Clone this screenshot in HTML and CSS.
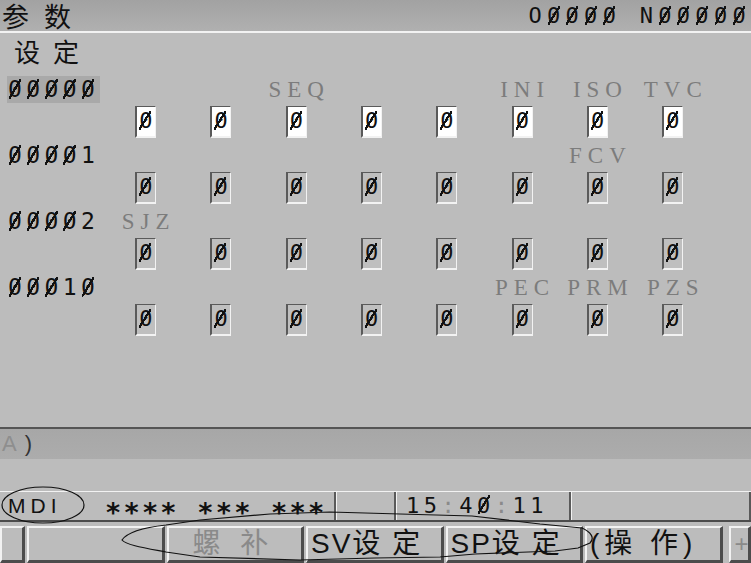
FILE: index.html
```html
<!DOCTYPE html>
<html lang="zh-CN">
<head>
  <meta charset="UTF-8">
  <meta name="viewport" content="width=device-width, initial-scale=1.0">
  <title>参数 - 设定</title>
  <link rel="stylesheet" href="styles.css">
</head>
<body>
  <div class="screen">
    <!-- Title bar -->
    <header class="title-bar">
      <h1 class="title">参数</h1>
      <div class="prog-no">O<span class="z">0</span><span class="z">0</span><span class="z">0</span><span class="z">0</span> N<span class="z">0</span><span class="z">0</span><span class="z">0</span><span class="z">0</span><span class="z">0</span></div>
    </header>

    <!-- Parameter list -->
    <main class="params">
      <h2 class="section-title">设定</h2>

      <div class="param">
        <span class="param-no current"><span class="z">0</span><span class="z">0</span><span class="z">0</span><span class="z">0</span><span class="z">0</span></span>
        <span class="bit-name"></span>
        <span class="bit-name"></span>
        <span class="bit-name">SEQ</span>
        <span class="bit-name"></span>
        <span class="bit-name"></span>
        <span class="bit-name">INI</span>
        <span class="bit-name">ISO</span>
        <span class="bit-name">TVC</span>
        <span class="bit on">0</span>
        <span class="bit on">0</span>
        <span class="bit on">0</span>
        <span class="bit on">0</span>
        <span class="bit on">0</span>
        <span class="bit on">0</span>
        <span class="bit on">0</span>
        <span class="bit on">0</span>
      </div>

      <div class="param">
        <span class="param-no"><span class="z">0</span><span class="z">0</span><span class="z">0</span><span class="z">0</span>1</span>
        <span class="bit-name"></span>
        <span class="bit-name"></span>
        <span class="bit-name"></span>
        <span class="bit-name"></span>
        <span class="bit-name"></span>
        <span class="bit-name"></span>
        <span class="bit-name">FCV</span>
        <span class="bit-name"></span>
        <span class="bit">0</span>
        <span class="bit">0</span>
        <span class="bit">0</span>
        <span class="bit">0</span>
        <span class="bit">0</span>
        <span class="bit">0</span>
        <span class="bit">0</span>
        <span class="bit">0</span>
      </div>

      <div class="param">
        <span class="param-no"><span class="z">0</span><span class="z">0</span><span class="z">0</span><span class="z">0</span>2</span>
        <span class="bit-name">SJZ</span>
        <span class="bit-name"></span>
        <span class="bit-name"></span>
        <span class="bit-name"></span>
        <span class="bit-name"></span>
        <span class="bit-name"></span>
        <span class="bit-name"></span>
        <span class="bit-name"></span>
        <span class="bit">0</span>
        <span class="bit">0</span>
        <span class="bit">0</span>
        <span class="bit">0</span>
        <span class="bit">0</span>
        <span class="bit">0</span>
        <span class="bit">0</span>
        <span class="bit">0</span>
      </div>

      <div class="param">
        <span class="param-no"><span class="z">0</span><span class="z">0</span><span class="z">0</span>1<span class="z">0</span></span>
        <span class="bit-name"></span>
        <span class="bit-name"></span>
        <span class="bit-name"></span>
        <span class="bit-name"></span>
        <span class="bit-name"></span>
        <span class="bit-name">PEC</span>
        <span class="bit-name">PRM</span>
        <span class="bit-name">PZS</span>
        <span class="bit">0</span>
        <span class="bit">0</span>
        <span class="bit">0</span>
        <span class="bit">0</span>
        <span class="bit">0</span>
        <span class="bit">0</span>
        <span class="bit">0</span>
        <span class="bit">0</span>
      </div>
    </main>

    <!-- Key-in line -->
    <div class="input-line"><span class="prompt">A</span><span class="caret">)</span></div>
    <div class="spacer"></div>

    <!-- Status line -->
    <div class="status">
      <div class="field mode">
        <span class="mdi">MDI</span>
        <span class="stars">**** *** ***</span>
      </div>
      <div class="field"></div>
      <div class="field clock">15<span class="colon">:</span>4<span class="z">0</span><span class="colon">:</span>11</div>
      <div class="field"></div>
    </div>

    <!-- Soft keys -->
    <nav class="softkeys">
      <div class="key"></div>
      <div class="key"></div>
      <div class="key dim pad-wide">螺 补</div>
      <div class="key">SV设 定</div>
      <div class="key">SP设 定</div>
      <div class="key spaced">(操 作)</div>
      <div class="key dim plus">+</div>
    </nav>

    <!-- Hand-drawn marks over the screen -->
    <svg class="marks" width="751" height="563" viewBox="0 0 751 563">
      <ellipse cx="43" cy="505" rx="41" ry="18" />
      <path d="M122,540 C128,531 148,527 166,525 L200,520 L270,514 L330,512 L400,514 L472,516 L540,524 L582,528 C591,532 595,538 590,543 L578,548 L555,551 L475,554 L440,557 L375,558 L300,560 L200,557 L166,552 C145,548 126,545 122,540 Z" />
    </svg>
  </div>
</body>
</html>
```

FILE: styles.css
```css
/* Global Styles */
:root {
  --screen-gray: #bcbcbc;
  --bar-gray: #a9a9a9;
  --edge-dark: #4c4c4c;
  --edge-light: #f2f2f2;
  --dim-text: #7c7c7c;
  --ink: #111111;
  --slash: linear-gradient(to bottom right, transparent 44%, currentColor 44%, currentColor 55%, transparent 55%);
}

* {
  box-sizing: border-box;
}

body {
  margin: 0;
  background-color: var(--screen-gray);
}

.screen {
  position: relative;
  width: 751px;
  height: 563px;
  display: flex;
  flex-direction: column;
  overflow: hidden;
  background-color: var(--screen-gray);
  color: var(--ink);
  font-family: "Noto Sans CJK SC", sans-serif;
}

/* Slashed zero, as the CNC font draws it */
.z {
  position: relative;
}

.z::after {
  content: "";
  position: absolute;
  left: 0.03em;
  top: 0.14em;
  width: 0.54em;
  height: 0.84em;
  background: var(--slash);
}

/* Title bar */
.title-bar {
  height: 33px;
  flex: none;
  display: flex;
  justify-content: space-between;
  align-items: center;
  background: linear-gradient(#a2a2a2, #b0b0b0);
  border-bottom: 2px solid var(--edge-light);
}

.title {
  margin: 0;
  padding-left: 2px;
  font-size: 27px;
  font-weight: 400;
  line-height: 31px;
  letter-spacing: 15px;
}

.prog-no {
  font-family: "DejaVu Sans Mono", monospace;
  font-size: 22px;
  line-height: 31px;
  letter-spacing: 5.3px;
}

/* Parameter list */
.params {
  flex: 1;
  padding: 5px 0 0 7px;
}

.section-title {
  margin: 0 0 12px 7px;
  font-size: 26px;
  font-weight: 400;
  line-height: 26px;
  letter-spacing: 13px;
}

.param {
  display: grid;
  grid-template-columns: 101px repeat(8, 75.3px);
  grid-template-rows: 27px 32px;
  row-gap: 3px;
  margin-bottom: 4px;
}

.param-no {
  grid-row: span 2;
  justify-self: start;
  align-self: start;
  height: 27px;
  padding: 0 1px 0 1px;
  font-family: "DejaVu Sans Mono", monospace;
  font-size: 23px;
  line-height: 27px;
  letter-spacing: 4.4px;
}

.param-no.current {
  background-color: var(--bar-gray);
}

.bit-name {
  justify-self: center;
  padding-left: 6px;
  font-family: "Liberation Serif", serif;
  font-size: 23px;
  line-height: 27px;
  letter-spacing: 6px;
  color: var(--dim-text);
}

.bit {
  position: relative;
  justify-self: center;
  width: 21px;
  height: 32px;
  padding-left: 2px;
  border-top: 1px solid #5a5a5a;
  border-left: 2px solid #5a5a5a;
  border-right: 1px solid var(--edge-light);
  border-bottom: 2px solid var(--edge-light);
  background-color: #bfbfbf;
  font-family: "DejaVu Sans Mono", monospace;
  font-size: 22px;
  line-height: 28px;
}

.bit::after {
  content: "";
  position: absolute;
  left: 2px;
  top: 4px;
  width: 12px;
  height: 19px;
  background: var(--slash);
}

.bit.on {
  background-color: #ffffff;
}

/* Key-in line */
.input-line {
  height: 32px;
  flex: none;
  padding-left: 2px;
  border-top: 2px solid #555555;
  background: linear-gradient(#a7a7a7, #acacac);
  font-family: "Liberation Sans", sans-serif;
  font-size: 22px;
  line-height: 30px;
  letter-spacing: 8px;
}

.prompt {
  color: #8e8e8e;
}

.caret {
  color: #333333;
}

.spacer {
  height: 32px;
  flex: none;
}

/* Status line */
.status {
  height: 31px;
  flex: none;
  display: grid;
  grid-template-columns: 336px 60px 175px 1fr;
  grid-template-rows: 28px;
  border-top: 1px solid var(--edge-light);
  border-bottom: 2px solid var(--edge-dark);
}

.field {
  display: flex;
  align-items: center;
  border-left: 1px solid var(--edge-light);
  border-right: 2px solid #5a5a5a;
}

.field.mode {
  border-left: none;
}

.mdi {
  margin-left: 8px;
  width: 97px;
  font-family: "Liberation Sans", sans-serif;
  font-size: 21px;
  line-height: 28px;
  letter-spacing: 5px;
}

.stars {
  font-family: "DejaVu Sans Mono", monospace;
  font-size: 27px;
  font-weight: bold;
  line-height: 28px;
  letter-spacing: 2.2px;
  white-space: pre;
  transform: translateY(7px);
}

.clock {
  padding-left: 9px;
  font-family: "DejaVu Sans Mono", monospace;
  font-size: 22px;
  line-height: 28px;
  letter-spacing: 4.5px;
}

.colon {
  color: #8a8a8a;
}

/* Soft keys */
.softkeys {
  height: 41px;
  flex: none;
  display: grid;
  grid-template-columns: 25px repeat(5, 137.5px) 1fr;
  grid-template-rows: 37px;
  column-gap: 2px;
  padding-top: 4px;
}

.key {
  display: flex;
  align-items: center;
  overflow: hidden;
  padding-left: 3px;
  border-top: 2px solid var(--edge-light);
  border-left: 2px solid var(--edge-light);
  border-right: 3px solid var(--edge-dark);
  border-bottom: 3px solid var(--edge-dark);
  background-color: var(--screen-gray);
  font-family: "Liberation Sans", "Noto Sans CJK SC", sans-serif;
  font-size: 28px;
  line-height: 30px;
  white-space: pre;
  letter-spacing: 2px;
}

.key.dim {
  color: #8a8a8a;
}

.key.pad-wide {
  padding-left: 24px;
  letter-spacing: 6px;
}

.key.spaced {
  letter-spacing: 5px;
}

.key.plus {
  margin-left: 4px;
  padding-left: 4px;
  font-size: 24px;
}

/* Hand-drawn marks */
.marks {
  position: absolute;
  top: 0;
  left: 0;
  pointer-events: none;
  fill: none;
  stroke: #111111;
  stroke-width: 1.2;
}
```
